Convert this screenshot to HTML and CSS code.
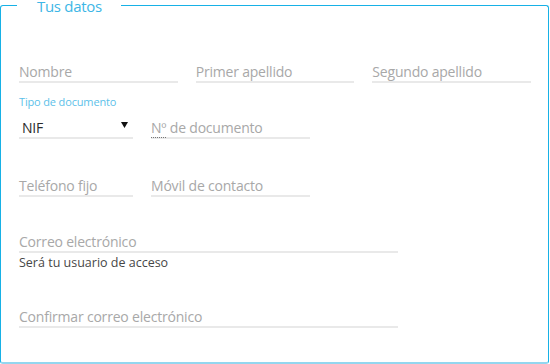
FILE: index.html
```html
<!DOCTYPE html>
<html lang="es">
<head>
<meta charset="utf-8">
<title>Tus datos</title>
<link rel="stylesheet" href="styles.css">
</head>
<body>
<form class="form">
  <fieldset class="card">
    <legend class="card-title">Tus datos</legend>

    <div class="row row-names">
      <div class="field col-third">
        <div class="lbl"></div>
        <div class="input"><span class="ph">Nombre</span></div>
      </div>
      <div class="field col-third">
        <div class="lbl"></div>
        <div class="input"><span class="ph">Primer apellido</span></div>
      </div>
      <div class="field col-third">
        <div class="lbl"></div>
        <div class="input"><span class="ph">Segundo apellido</span></div>
      </div>
    </div>

    <div class="row row-doc">
      <div class="field col-small">
        <div class="lbl lbl-active">Tipo de documento</div>
        <div class="input select">
          <span class="value">NIF</span>
          <svg class="caret" width="7" height="6" viewBox="0 0 7 6" aria-hidden="true"><path d="M0 0H7L3.5 6Z" fill="#111"/></svg>
        </div>
      </div>
      <div class="field col-mid">
        <div class="lbl"></div>
        <div class="input"><span class="ph"><abbr class="abbr" title="Número">Nº</abbr> de documento</span></div>
      </div>
    </div>

    <div class="row">
      <div class="field col-small">
        <div class="lbl"></div>
        <div class="input"><span class="ph">Teléfono fijo</span></div>
      </div>
      <div class="field col-mid">
        <div class="lbl"></div>
        <div class="input"><span class="ph">Móvil de contacto</span></div>
      </div>
    </div>

    <div class="row row-help">
      <div class="field col-wide">
        <div class="lbl"></div>
        <div class="input"><span class="ph">Correo electrónico</span></div>
        <div class="help">Será tu usuario de acceso</div>
      </div>
    </div>

    <div class="row">
      <div class="field col-wide">
        <div class="lbl"></div>
        <div class="input"><span class="ph">Confirmar correo electrónico</span></div>
      </div>
    </div>
  </fieldset>
</form>
</body>
</html>
```
FILE: styles.css
```css
html, body {
  margin: 0;
  padding: 0;
  background: #ffffff;
}

body {
  width: 550px;
  height: 364px;
  overflow: hidden;
  font-family: "Open Sans", "Noto Sans", "Liberation Sans", sans-serif;
  color: #333333;
}

.form {
  margin: 0;
}

.card {
  box-sizing: border-box;
  margin: 0 1px 0 0;
  height: 364px;
  padding: 28px 17px 0 18px;
  border: 1px solid #17b1e6;
  border-bottom: 2px solid #93d6ef;
  border-radius: 3px;
  min-width: 0;
}

.card-title {
  margin-left: -2px;
  padding: 2px 19px 0 20px;
  font-size: 15px;
  line-height: 9px;
  color: #3db6e6;
  letter-spacing: -0.3px;
}

.row {
  display: flex;
  gap: 18px;
  margin-bottom: 12px;
}

.row-doc {
  margin-bottom: 14px;
}

.field {
  display: flex;
  flex-direction: column;
}

.col-third {
  flex: 1 1 0;
  min-width: 0;
}

.col-small {
  width: 114px;
}

.col-mid {
  width: 159px;
}

.col-wide {
  width: 379px;
}

.lbl {
  height: 14px;
  margin-bottom: 10px;
  font-size: 11px;
  line-height: 14px;
  color: #5cbfe9;
  letter-spacing: -0.15px;
  white-space: nowrap;
}

.input {
  position: relative;
  height: 18px;
  border-bottom: 2px solid #e9e9e9;
  font-size: 14px;
  line-height: 18px;
  letter-spacing: -0.2px;
  white-space: nowrap;
}

.ph {
  color: #a8a8a8;
}

.value {
  padding-left: 3px;
  color: #2b2b2b;
}

.select {
  display: flex;
  align-items: center;
  justify-content: space-between;
}

.caret {
  margin-right: 5px;
  margin-top: -6px;
}

.abbr {
  text-decoration: none;
  border-bottom: 1px dotted #777777;
}

.help {
  margin-top: 3px;
  margin-bottom: 2px;
  font-size: 12.5px;
  line-height: 14px;
  color: #474747;
  letter-spacing: 0;
  white-space: nowrap;
}
```
